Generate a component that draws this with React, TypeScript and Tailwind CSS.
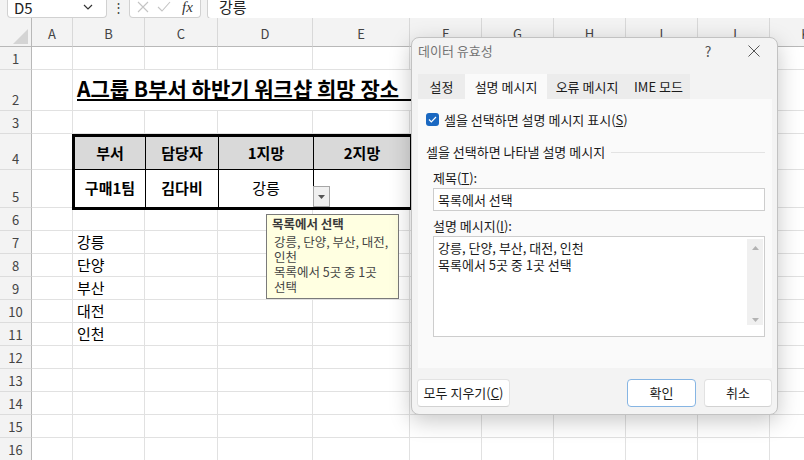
import React from 'react'

const letters = ['A', 'B', 'C', 'D', 'E', 'F', 'G', 'H', 'I', 'J', 'K']
const rowHeights = [23, 41, 23, 36, 38, 23, 23, 23, 23, 23, 23, 23, 23, 23, 23, 23]
const places: Record<number, string> = { 7: '강릉', 8: '단양', 9: '부산', 10: '대전', 11: '인천' }

function FormulaBar() {
  return (
    <div className="flex h-[18px] items-start bg-[#f3f3f3]">
      <div className="ml-[7px] flex h-[18px] w-[100px] items-center justify-between rounded-b-[4px] border-x border-b border-[#d1d1d1] bg-white pl-[6px] pr-[13px]">
        <span className="-translate-y-[1px] text-[15px] leading-[16px] text-[#222]">D5</span>
        <svg width="10" height="6" viewBox="0 0 10 6" className="-translate-y-[2px]">
          <path d="M1 1l4 4 4-4" fill="none" stroke="#333" strokeWidth="1.2" />
        </svg>
      </div>
      <div className="flex w-[22px] justify-center text-[13px] leading-[14px] text-[#444]">⋮</div>
      <div className="flex h-[18px] w-[72px] items-center rounded-b-[4px] border-x border-b border-[#d1d1d1] bg-white">
        <svg width="12" height="12" viewBox="0 0 12 12" className="ml-[7px] -translate-y-[2px]">
          <path d="M1 1l10 10M11 1L1 11" stroke="#c4c4c4" strokeWidth="1.1" />
        </svg>
        <svg width="14" height="12" viewBox="0 0 14 12" className="ml-[8px] -translate-y-[2px]">
          <path d="M1 6l4 4 8-9" fill="none" stroke="#c4c4c4" strokeWidth="1.1" />
        </svg>
        <span className="ml-[11px] -translate-y-[2px] font-['Liberation_Serif',serif] text-[15px] italic leading-[16px] text-[#333]">fx</span>
      </div>
      <div className="ml-[6px] flex h-[19px] flex-1 items-center rounded-bl-[4px] border-b border-l border-[#d1d1d1] bg-white pl-[11px]">
        <span className="-translate-y-[2px] text-[15px] leading-[16px] text-[#222]">강릉</span>
      </div>
    </div>
  )
}

function Sheet() {
  const cells: React.ReactNode[] = []
  cells.push(
    <div key="corner" className="relative border-r border-b border-r-[#b8b8b8] border-b-[#b8b8b8] bg-[#f3f3f3]">
      <svg width="15" height="15" viewBox="0 0 15 15" className="absolute bottom-[2px] right-[3px]">
        <path d="M15 0V15H0Z" fill="#d4d4d4" />
      </svg>
    </div>
  )
  letters.forEach((l) =>
    cells.push(
      <div
        key={`h${l}`}
        className="flex items-end justify-center border-r border-b border-r-[#d8d8d8] border-b-[#b8b8b8] bg-[#f3f3f3] pb-[4px] text-[13px] leading-[16px] text-[#444]"
      >
        {l}
      </div>
    )
  )
  rowHeights.forEach((_, i) => {
    const r = i + 1
    cells.push(
      <div
        key={`r${r}`}
        className="flex items-end justify-center border-r border-b border-r-[#b8b8b8] border-b-[#dcdcdc] bg-[#f3f3f3] pb-[2px] text-[13px] leading-[16px] text-[#444]"
      >
        {r}
      </div>
    )
    letters.forEach((l, c) => {
      const ci = c + 1
      if ((r === 2 || r === 4 || r === 5) && ci >= 2 && ci <= 6) return
      cells.push(
        <div key={`${l}${r}`} className="flex items-end border-r border-b border-[#e1e1e1] pb-[2px] pl-[4px] text-[15px] leading-[18px] text-black">
          {ci === 2 ? places[r] : null}
        </div>
      )
    })
  })

  return (
    <div className="grid grid-cols-[32px_41px_72px_73px_95px_97px_72px_72px_72px_72px_72px_72px] grid-rows-[29px_23px_41px_23px_36px_38px_repeat(11,23px)]">
      {cells}
      <div className="col-span-5 col-start-3 row-start-3 flex items-end border-b border-[#e1e1e1] pb-[10px] pl-[4px]">
        <span className="whitespace-pre text-[21px] font-bold leading-[24px] text-black underline decoration-[1.5px] underline-offset-[2px]">
          {'A그룹 B부서 하반기 워크샵 희망 장소   '}
        </span>
      </div>
      <div className="relative z-[1] col-span-5 col-start-3 row-span-2 row-start-5 -ml-px grid h-[76px] grid-cols-[71px_73px_95px_97px_1fr] grid-rows-[33px_37px] self-start border-[3px] border-black text-[15px] font-bold text-black">
        {['부서', '담당자', '1지망', '2지망', '3지망'].map((t, i) => (
          <div key={t} className={`flex items-center justify-center border-b border-black bg-[#d9d9d9] ${i < 4 ? 'border-r' : ''}`}>
            {t}
          </div>
        ))}
        <div className="flex items-center justify-center border-r border-black">구매1팀</div>
        <div className="flex items-center justify-center border-r border-black">김다비</div>
        <div className="flex items-center justify-center border-r border-black font-normal">강릉</div>
        <div className="relative border-r border-black">
          <div className="absolute bottom-0 left-[-1px] flex h-[21px] w-[17px] items-center justify-center border border-[#a6a6a6] bg-[#f0f0f0]">
            <svg width="7" height="4" viewBox="0 0 7 4">
              <path d="M0 0h7L3.5 4Z" fill="#555" />
            </svg>
          </div>
        </div>
        <div />
      </div>
    </div>
  )
}

function Tooltip() {
  return (
    <div className="absolute left-[266px] top-[214px] z-[5] h-[85px] w-[133px] border border-[#7a7a7a] bg-[#ffffe1] pl-[5px] pt-[1px] text-[12.5px] leading-[15px] text-[#444]">
      <div className="font-bold text-[#3a3a3a]">목록에서 선택</div>
      <div className="mt-[3px] pl-[2px]">
        <div>강릉, 단양, 부산, 대전,</div>
        <div>인천</div>
        <div>목록에서 5곳 중 1곳</div>
        <div>선택</div>
      </div>
    </div>
  )
}

function Dialog() {
  const tabs = [
    { t: '설정', w: 'w-[47px]', active: false },
    { t: '설명 메시지', w: 'w-[82px]', active: true },
    { t: '오류 메시지', w: 'w-[80px]', active: false },
    { t: 'IME 모드', w: 'w-[63px]', active: false },
  ]
  return (
    <div className="absolute left-[411px] top-[37px] z-10 h-[378px] w-[367px] rounded-[8px] border border-[#c2c2c2] bg-[#f3f3f3] text-[13px] text-[#1b1b1b] shadow-[0_6px_22px_rgba(0,0,0,0.22)]">
      <div className="flex h-[26px] items-center">
        <span className="pl-[6px] text-[#737373]">데이터 유효성</span>
        <div className="ml-auto flex w-[46px] justify-center text-[14px] text-[#555]">?</div>
        <div className="flex w-[46px] justify-center">
          <svg width="12" height="12" viewBox="0 0 12 12">
            <path d="M0.5 0.5l11 11M11.5 0.5l-11 11" stroke="#555" strokeWidth="1" />
          </svg>
        </div>
      </div>
      <div className="mt-[10px] flex h-[25px] pl-[6px]">
        {tabs.map((tab) => (
          <div key={tab.t} className={`flex items-center justify-center ${tab.w} ${tab.active ? 'bg-[#fafafa]' : 'bg-[#ececec]'}`}>
            {tab.t}
          </div>
        ))}
      </div>
      <div className="ml-[6px] h-[269px] w-[354px] bg-[#fafafa] pt-[14px]">
        <div className="flex h-[13px] items-center pl-[8px]">
          <div className="flex h-[13px] w-[13px] items-center justify-center rounded-[3px] bg-[#1a68c1]">
            <svg width="9" height="7" viewBox="0 0 9 7">
              <path d="M1 3.5l2.3 2.3L8 1" fill="none" stroke="#fff" strokeWidth="1.2" />
            </svg>
          </div>
          <span className="ml-[5px] leading-[16px]">
            셀을 선택하면 설명 메시지 표시(<span className="underline">S</span>)
          </span>
        </div>
        <div className="mt-[18px] flex h-[16px] items-center pl-[8px] pr-[7px]">
          <span className="leading-[16px]">셀을 선택하면 나타낼 설명 메시지</span>
          <div className="ml-[6px] h-px flex-1 bg-[#e3e3e3]" />
        </div>
        <div className="pl-[15px] pr-[7px]">
          <div className="mt-[10px] h-[16px] leading-[16px]">
            제목(<span className="underline">T</span>):
          </div>
          <div className="mt-[2px] flex h-[23px] items-center border border-[#cdcdcd] bg-white pl-[4px]">목록에서 선택</div>
          <div className="mt-[7px] h-[16px] leading-[16px]">
            설명 메시지(<span className="underline">I</span>):
          </div>
          <div className="relative mt-[2px] h-[101px] border border-[#cdcdcd] bg-white pl-[4px] pt-[2px] leading-[17px]">
            <div>강릉, 단양, 부산, 대전, 인천</div>
            <div>목록에서 5곳 중 1곳 선택</div>
            <div className="absolute bottom-[11px] right-[1px] top-[2px] flex w-[16px] flex-col items-center justify-between bg-[#f0f0f0] pb-[3px] pt-[7px]">
              <svg width="7" height="4" viewBox="0 0 7 4">
                <path d="M0 4h7L3.5 0Z" fill="#b3b3b3" />
              </svg>
              <svg width="7" height="4" viewBox="0 0 7 4">
                <path d="M0 0h7L3.5 4Z" fill="#b3b3b3" />
              </svg>
            </div>
          </div>
        </div>
      </div>
      <div className="mt-[11px] flex h-[28px] px-[5px]">
        <div className="flex w-[93px] items-center justify-center rounded-[4px] border border-[#e2e2e2] border-b-[#d2d2d2] bg-white">
          모두 지우기(<span className="underline">C</span>)
        </div>
        <div className="ml-auto flex w-[69px] items-center justify-center rounded-[4px] border border-[#86b5e3] bg-white">확인</div>
        <div className="ml-[8px] flex w-[68px] items-center justify-center rounded-[4px] border border-[#e2e2e2] border-b-[#d2d2d2] bg-white">취소</div>
      </div>
    </div>
  )
}

export default function App() {
  return (
    <div className="relative h-[460px] w-[804px] overflow-hidden bg-white font-['Noto_Sans_CJK_KR',sans-serif]">
      <FormulaBar />
      <Sheet />
      <Tooltip />
      <Dialog />
    </div>
  )
}
